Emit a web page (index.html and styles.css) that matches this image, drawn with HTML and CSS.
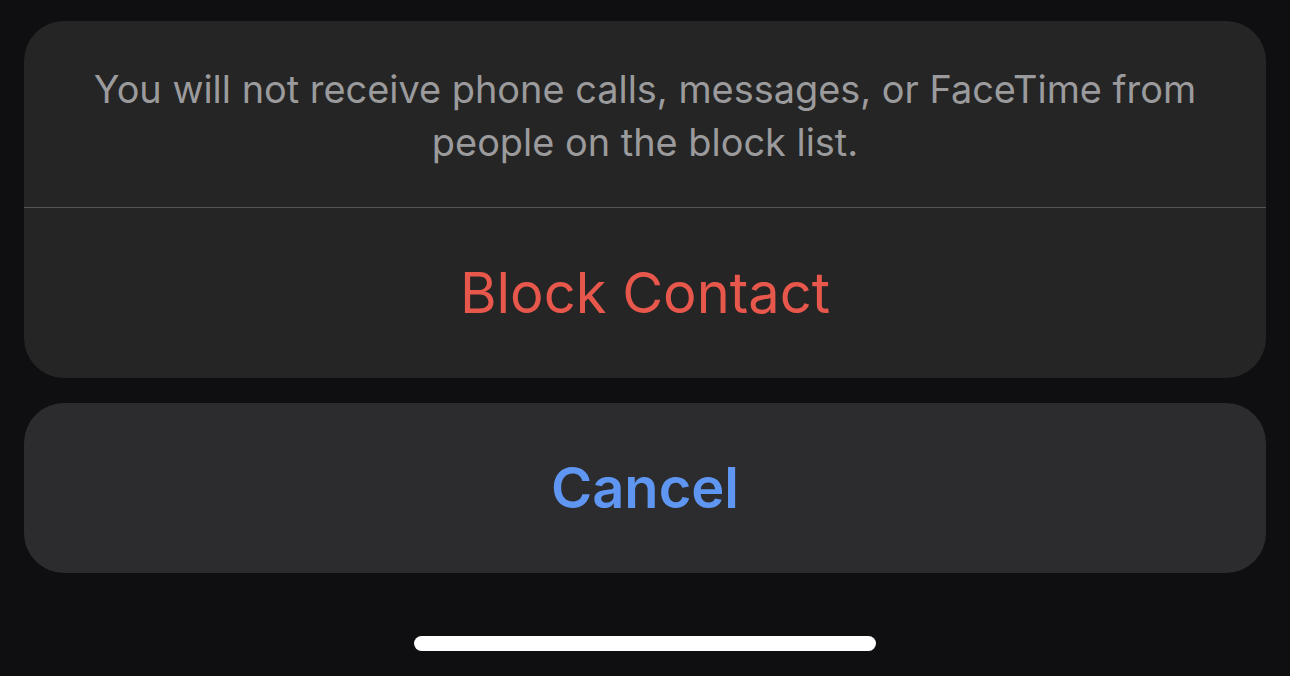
FILE: index.html
```html
<!DOCTYPE html>
<html lang="en">
<head>
    <meta charset="UTF-8">
    <meta name="viewport" content="width=device-width, initial-scale=1.0">
    <title>Block Contact</title>
    <link rel="stylesheet" href="styles.css">
</head>
<body>
    <div class="sheet">
        <!-- Action group -->
        <div class="group">
            <div class="message">
                <p>You will not receive phone calls, messages, or FaceTime from people on the block list.</p>
            </div>
            <button class="action destructive">Block Contact</button>
        </div>

        <!-- Cancel -->
        <div class="group cancel-group">
            <button class="action cancel">Cancel</button>
        </div>
    </div>

    <div class="home-bar">
        <span class="home-indicator"></span>
    </div>
</body>
</html>
```

FILE: styles.css
```css
html, body {
    height: 100%;
}
body {
    margin: 0;
    padding: 21px 24px 0;
    box-sizing: border-box;
    background: #0f0f11;
    font-family: Inter, "Noto Sans", sans-serif;
    display: flex;
    flex-direction: column;
}
.sheet {
    display: flex;
    flex-direction: column;
    gap: 25px;
}
.group {
    background: #252525;
    border-radius: 40px;
    overflow: hidden;
    display: flex;
    flex-direction: column;
}
.cancel-group {
    background: #2c2c2e;
}
.message {
    height: 187px;
    box-sizing: border-box;
    padding: 4px 40px 0;
    display: flex;
    align-items: center;
    justify-content: center;
    border-bottom: 1px solid #545456;
}
.message p {
    margin: 0;
    color: #9b9b9d;
    font-size: 37.9px;
    line-height: 53px;
    text-align: center;
}
.action {
    height: 170px;
    border: none;
    background: none;
    font-family: inherit;
    font-size: 56px;
    cursor: pointer;
    padding: 0;
}
.destructive {
    color: #e8574b;
    font-weight: 400;
}
.cancel {
    color: #5e96f1;
    font-weight: 600;
    font-size: 56px;
}
.home-bar {
    flex: 1;
    display: flex;
    justify-content: center;
    padding-top: 63px;
}
.home-indicator {
    width: 462px;
    height: 15px;
    border-radius: 8px;
    background: #fff;
}
```
